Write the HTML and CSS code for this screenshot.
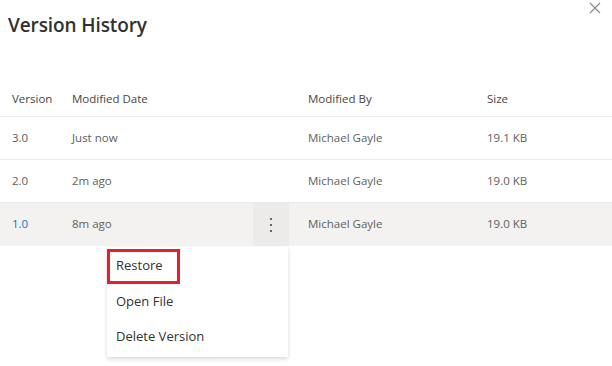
FILE: index.html
```html
<!DOCTYPE html>
<html>
	<head>
		<meta charset="utf-8">
		<title>Version History</title>
		<link rel="stylesheet" href="styles.css">
	</head>
	<body>
		<div class="panel">
			<div class="top">
				<h1 class="title">Version History</h1>
				<svg class="close" width="12" height="12" viewBox="0 0 12 12">
					<path d="M1 1 L11 11 M11 1 L1 11" stroke="#8a8886" stroke-width="1.1" fill="none"/>
				</svg>
			</div>
			<div class="table">
				<div class="row head">
					<span class="c1">Version</span>
					<span class="c2">Modified Date</span>
					<span class="c3"></span>
					<span class="c4">Modified By</span>
					<span class="c5">Size</span>
				</div>
				<div class="row">
					<span class="c1">3.0</span>
					<span class="c2">Just now</span>
					<span class="c3"></span>
					<span class="c4">Michael Gayle</span>
					<span class="c5">19.1 KB</span>
				</div>
				<div class="row">
					<span class="c1">2.0</span>
					<span class="c2">2m ago</span>
					<span class="c3"></span>
					<span class="c4">Michael Gayle</span>
					<span class="c5">19.0 KB</span>
				</div>
				<div class="row active">
					<span class="c1 link">1.0</span>
					<span class="c2">8m ago</span>
					<span class="c3 more">
						<svg width="4" height="16" viewBox="0 0 4 16">
							<circle cx="2" cy="2" r="1.1" fill="#484644"/>
							<circle cx="2" cy="8" r="1.1" fill="#484644"/>
							<circle cx="2" cy="14" r="1.1" fill="#484644"/>
						</svg>
					</span>
					<span class="c4">Michael Gayle</span>
					<span class="c5">19.0 KB</span>
					<div class="menu">
						<div class="item">Restore<span class="mark"></span></div>
						<div class="item">Open File</div>
						<div class="item">Delete Version</div>
					</div>
				</div>
			</div>
		</div>
	</body>
</html>
```

FILE: styles.css
```css
body {
	margin: 0;
	background-color: #ffffff;
	font-family: "Open Sans", "Noto Sans", sans-serif;
}

.panel {
	width: 612px;
	height: 366px;
	overflow: hidden;
}

.top {
	display: flex;
	justify-content: space-between;
	height: 84px;
}

.title {
	margin: 12px 0 0 8px;
	font-size: 19px;
	font-weight: 600;
	color: #323130;
	line-height: 26px;
	letter-spacing: -0.1px;
}

.close {
	margin: 2px 11px 0 0;
}

.row {
	position: relative;
	display: grid;
	grid-template-columns: 60px 181px 36px 19px 179px 1fr;
	height: 42px;
	border-bottom: 1px solid #edebe9;
	font-size: 11.5px;
	color: #605e5c;
	padding-left: 12px;
}

.row span {
	display: flex;
	align-items: center;
	padding-bottom: 2px;
}

.row .c4 {
	grid-column: 5;
}

.row .more {
	padding-bottom: 0;
}

.row.head {
	height: 31px;
	color: #484644;
	padding-bottom: 1px;
}

.row.active {
	height: 43px;
	background-color: #f3f2f1;
	border-bottom: none;
}

.link {
	color: #0078d4;
}

.more {
	justify-content: center;
	background-color: #edebe9;
}

.menu {
	position: absolute;
	left: 107px;
	top: 44px;
	width: 181px;
	background-color: #ffffff;
	box-shadow: 0 1.6px 4px rgba(0, 0, 0, 0.15), 0 0.3px 1px rgba(0, 0, 0, 0.12);
	padding: 1px 0 2px;
	z-index: 2;
}

.item {
	position: relative;
	height: 35.5px;
	line-height: 35px;
	padding-left: 9px;
	font-size: 13px;
	color: #323130;
}

.mark {
	position: absolute;
	left: 0;
	top: 1px;
	width: 67px;
	height: 27px;
	border: 3.5px solid #e3202b;
}
```
